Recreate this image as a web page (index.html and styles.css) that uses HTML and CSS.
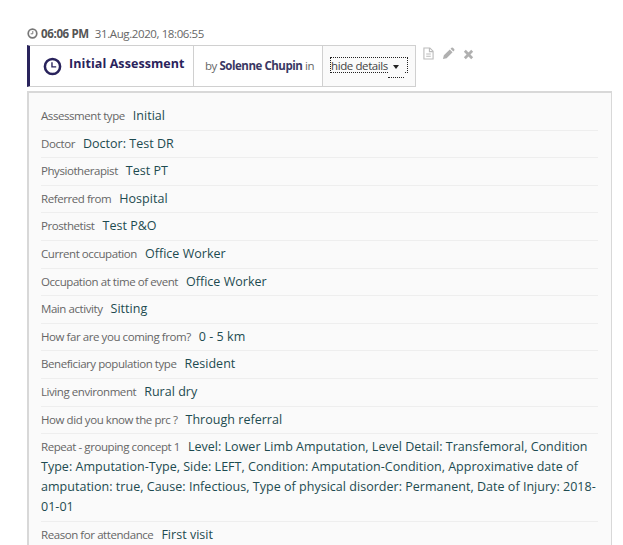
FILE: index.html
```html
<!DOCTYPE html>
<html lang="en">
<head>
<meta charset="utf-8">
<title>Initial Assessment</title>
<link rel="stylesheet" href="styles.css">
</head>
<body>
<main class="page">
  <div class="stamp">
    <svg class="stamp-clock" viewBox="0 0 18 18"><circle cx="9" cy="9" r="7"/><path d="M9.5 5v4.5H6"/></svg>
    <strong class="time">06:06 PM</strong>
    <span class="date">31.Aug.2020, 18:06:55</span>
  </div>
  <header class="head">
    <div class="card">
      <div class="title">
        <svg class="clock" viewBox="0 0 18 18"><circle cx="9" cy="9" r="7.2"/><path d="M8.5 5v4.3h4"/></svg>
        <h1>Initial Assessment</h1>
      </div>
      <div class="author"><span>by <strong>Solenne Chupin</strong> in</span></div>
      <div class="toggle"><a class="link"><span>hide details</span><i class="caret"></i></a></div>
    </div>
    <div class="actions">
      <svg class="doc" viewBox="0 0 12 14"><path d="M1 1h6.5L11 4.5V13H1zM7 1v4h4M3.5 7.5h5M3.5 10h5"/></svg>
      <svg class="pencil" viewBox="0 0 14 14"><path d="M1 13l1-4 6.4-6.4 3 3L5 12zM9.2 1.8l1-1q.8-.6 1.6.1l1.3 1.3q.7.8.1 1.6l-1 1z"/></svg>
      <svg class="cross" viewBox="0 0 12 12"><path d="M2 2l8 8M10 2l-8 8"/></svg>
    </div>
  </header>
  <section class="panel">
    <div class="row"><span class="label">Assessment type</span><span class="value">Initial</span></div>
    <div class="row"><span class="label">Doctor</span><span class="value">Doctor: Test DR</span></div>
    <div class="row"><span class="label">Physiotherapist</span><span class="value">Test PT</span></div>
    <div class="row"><span class="label">Referred from</span><span class="value">Hospital</span></div>
    <div class="row"><span class="label">Prosthetist</span><span class="value">Test P&amp;O</span></div>
    <div class="row"><span class="label">Current occupation</span><span class="value">Office Worker</span></div>
    <div class="row"><span class="label">Occupation at time of event</span><span class="value">Office Worker</span></div>
    <div class="row"><span class="label">Main activity</span><span class="value">Sitting</span></div>
    <div class="row"><span class="label">How far are you coming from?</span><span class="value">0 - 5 km</span></div>
    <div class="row"><span class="label">Beneficiary population type</span><span class="value">Resident</span></div>
    <div class="row"><span class="label">Living environment</span><span class="value">Rural dry</span></div>
    <div class="row"><span class="label">How did you know the prc ?</span><span class="value">Through referral</span></div>
    <div class="row"><span class="label">Repeat - grouping concept 1</span><span class="value">Level: Lower Limb Amputation, Level Detail: Transfemoral, Condition<br>Type: Amputation-Type, Side: LEFT, Condition: Amputation-Condition, Approximative date of<br>amputation: true, Cause: Infectious, Type of physical disorder: Permanent, Date of Injury: 2018-<br>01-01</span></div>
    <div class="row"><span class="label">Reason for attendance</span><span class="value">First visit</span></div>
  </section>
</main>
</body>
</html>
```
FILE: styles.css
```css
* { box-sizing: border-box; }
body {
  margin: 0;
  height: 545px;
  overflow: hidden;
  background: #fff;
  color: #666;
  font-family: "Open Sans", sans-serif;
  font-size: 12px;
}
.page { padding: 24px 0 0 27px; }
.stamp { display: flex; align-items: center; height: 18px; white-space: nowrap; font-size: 11.5px; letter-spacing: -.45px; }
.stamp-clock { width: 11px; height: 11px; margin-right: 3px; fill: none; stroke: #777; stroke-width: 2.8; }
.stamp-clock path { stroke-width: 1.6; }
.time { margin-right: 6px; color: #555; letter-spacing: -.35px; }
.date { letter-spacing: -.4px; }
.head { display: flex; height: 49px; padding-top: 3px; }
.card {
  display: flex;
  width: 389px;
  height: 42px;
  border: 1.5px solid #d0d0d0;
  border-left: 3px solid #29235c;
}
.title { display: flex; align-items: center; width: 163px; padding-left: 13px; color: #29235c; white-space: nowrap; }
.clock { width: 19px; height: 19px; margin: 0 7px 0 0; fill: none; stroke: #29235c; stroke-width: 2.4; }
.clock path { stroke-width: 1.3; }
h1 { margin: 0 0 5px; font-size: 12.5px; font-weight: 700; letter-spacing: .08px; }
.author {
  display: flex;
  align-items: center;
  width: 130px;
  padding: 0 0 1px 11px;
  border-left: 1px solid #d0d0d0;
  border-right: 1px solid #d0d0d0;
  white-space: nowrap;
  font-size: 11.5px;
  letter-spacing: -.46px;
}
.author strong { color: #3a3763; }
.toggle { flex: 1; padding: 11px 0 0 7px; background: #fafafa; }
.link {
  display: flex;
  align-items: center;
  width: 78px;
  height: 16px;
  border: 1px dotted #222;
  color: #444;
  white-space: nowrap;
  font-size: 11.5px;
  letter-spacing: -.4px;
}
.caret {
  position: relative;
  margin: 3px 0 0 5px;
  border: 3.5px solid transparent;
  border-top: 4px solid #222;
  border-bottom: 0;
}
.caret::after {
  content: "";
  position: absolute;
  left: -8px;
  top: 2px;
  width: 16px;
  height: 6px;
  background: #fafafa;
  border-bottom: 1px dotted #222;
}
.actions { display: flex; align-items: flex-start; padding: 2px 0 0 7px; }
.doc { width: 11px; height: 13px; margin-right: 8px; fill: none; stroke: #bbb; stroke-width: 1.2; }
.pencil { width: 13px; height: 13px; margin-right: 8px; fill: #b0b0b0; }
.cross { width: 11px; height: 11px; margin-top: 2px; fill: none; stroke: #b0b0b0; stroke-width: 3; }
.panel {
  width: 585px;
  height: 470px;
  padding: 10px 13px 0 12px;
  border: 2px solid #d8d8d8;
  border-right-width: 1.5px;
  background: #fafafa;
}
.row {
  padding: 3px 0 3.6px;
  border-bottom: 1px solid #eee;
  line-height: 20px;
  white-space: nowrap;
}
.label { margin-right: 8px; font-size: 11.5px; letter-spacing: -.43px; }
.value { color: #1d4b50; font-size: 12.5px; letter-spacing: .025px; }
```
